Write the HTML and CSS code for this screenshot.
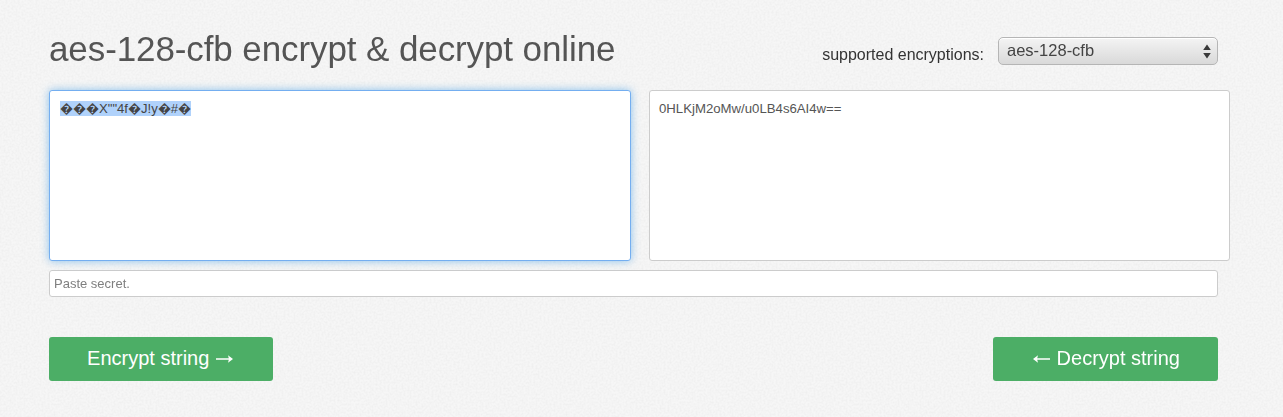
FILE: index.html
```html
<!DOCTYPE html>
<html lang="en">
<head>
<meta charset="utf-8">
<title>aes-128-cfb encrypt &amp; decrypt online</title>
<link rel="stylesheet" href="styles.css">
</head>
<body>
<svg class="texture" aria-hidden="true" width="100%" height="100%">
  <filter id="paper" x="0" y="0" width="100%" height="100%">
    <feTurbulence type="fractalNoise" baseFrequency="0.5" numOctaves="2" seed="4"/>
    <feColorMatrix type="matrix" values="0 0 0 0 0.6  0 0 0 0 0.6  0 0 0 0 0.6  0.35 0 0 0 -0.13"/>
  </filter>
  <rect width="100%" height="100%" filter="url(#paper)"/>
</svg>
<main class="page">
  <header class="head">
    <h1 class="title">aes-128-cfb encrypt &amp; decrypt online</h1>
    <div class="picker">
      <span class="picker-label">supported encryptions:</span>
      <div class="select">
        <span>aes-128-cfb</span>
        <svg class="updown" width="8" height="15" viewBox="0 0 8 15"><path d="M4 0.5 L7.8 6 H0.2 Z M0.2 9 H7.8 L4 14.5 Z" fill="#3a3a3a"/></svg>
      </div>
    </div>
  </header>
  <section class="panes">
    <div class="pane pane-focus"><span class="selected">���X""4f�J!y�#�</span></div>
    <div class="pane pane-output">0HLKjM2oMw/u0LB4s6AI4w==</div>
  </section>
  <input class="secret" type="text" placeholder="Paste secret.">
  <div class="actions">
    <button class="btn btn-enc" type="button">Encrypt string <svg class="arrow" width="17" height="12" viewBox="0 0 17 12"><path d="M0 5.3 H13 V6.7 H0 Z M12 2.2 L17 6 L12 9.8 L13 6 Z" fill="#fff"/></svg></button>
    <button class="btn btn-dec" type="button"><svg class="arrow" width="17" height="12" viewBox="0 0 17 12"><path d="M17 5.3 H4 V6.7 H17 Z M5 2.2 L0 6 L5 9.8 L4 6 Z" fill="#fff"/></svg> Decrypt string</button>
  </div>
</main>
</body>
</html>
```
FILE: styles.css
```css
html, body {
  margin: 0;
  height: 100%;
}
body {
  background: #f6f6f6;
  font-family: "Liberation Sans", Arial, sans-serif;
  color: #555;
  overflow: hidden;
}
.texture {
  position: fixed;
  inset: 0;
  z-index: 0;
}
.page {
  position: relative;
  z-index: 1;
  box-sizing: border-box;
  width: 1181px;
  margin-left: 49px;
  padding-top: 28px;
}
.head {
  display: flex;
  justify-content: space-between;
  align-items: flex-start;
  height: 62px;
  padding-right: 12px;
}
.title {
  margin: 0;
  font-size: 35px;
  line-height: 42px;
  font-weight: 400;
  letter-spacing: -0.1px;
  color: #555;
}
.picker {
  display: flex;
  align-items: flex-start;
  gap: 14px;
  margin-top: 9px;
}
.picker-label {
  margin-top: 9px;
  font-size: 16px;
  line-height: 18px;
  color: #333;
}
.select {
  box-sizing: border-box;
  width: 220px;
  height: 28px;
  display: flex;
  align-items: center;
  justify-content: space-between;
  padding: 0 6px 2px 8px;
  border: 1px solid #b5b5b5;
  border-radius: 5px;
  background: linear-gradient(#f4f4f4, #e9e9e9 40%, #d9d9d9);
  box-shadow: inset 0 1px 0 #fff;
  font-size: 16.5px;
  color: #444;
}
.updown {
  margin-top: 2px;
}
.panes {
  display: grid;
  grid-template-columns: 582px 581px;
  gap: 18px;
}
.pane {
  box-sizing: border-box;
  height: 171px;
  padding: 10px;
  background: #fff;
  border: 1px solid #ccc;
  border-radius: 3px;
  font-size: 13.2px;
  line-height: 15px;
  color: #555;
}
.pane-output {
  padding-left: 9px;
}
.pane-focus {
  border-color: #74aef0;
  box-shadow: 0 0 9px rgba(102, 175, 233, 0.75);
  font-size: 13.1px;
}
.selected {
  background: #b0d2fb;
  color: #444;
}
.secret {
  display: block;
  box-sizing: border-box;
  width: 1169px;
  height: 27px;
  margin-top: 9px;
  padding: 0 4px;
  background: #fff;
  border: 1px solid #ccc;
  border-radius: 3px;
  font-family: inherit;
  font-size: 13px;
  outline: none;
}
.secret::placeholder {
  color: #7f7f7f;
  opacity: 1;
}
.actions {
  display: flex;
  justify-content: space-between;
  width: 1169px;
  margin-top: 40px;
}
.btn {
  box-sizing: border-box;
  height: 44px;
  padding: 0 0 2px;
  background: #4cae66;
  border: 0;
  border-radius: 3px;
  color: #fff;
  font-family: inherit;
  font-size: 20px;
  line-height: 24px;
}
.arrow {
  vertical-align: 0;
  margin: 0 1px;
}
.btn-enc {
  width: 224px;
}
.btn-enc .arrow {
  margin-right: 2px;
}
.btn-dec {
  width: 225px;
}
.btn-dec .arrow {
  margin-left: 2px;
}
```
